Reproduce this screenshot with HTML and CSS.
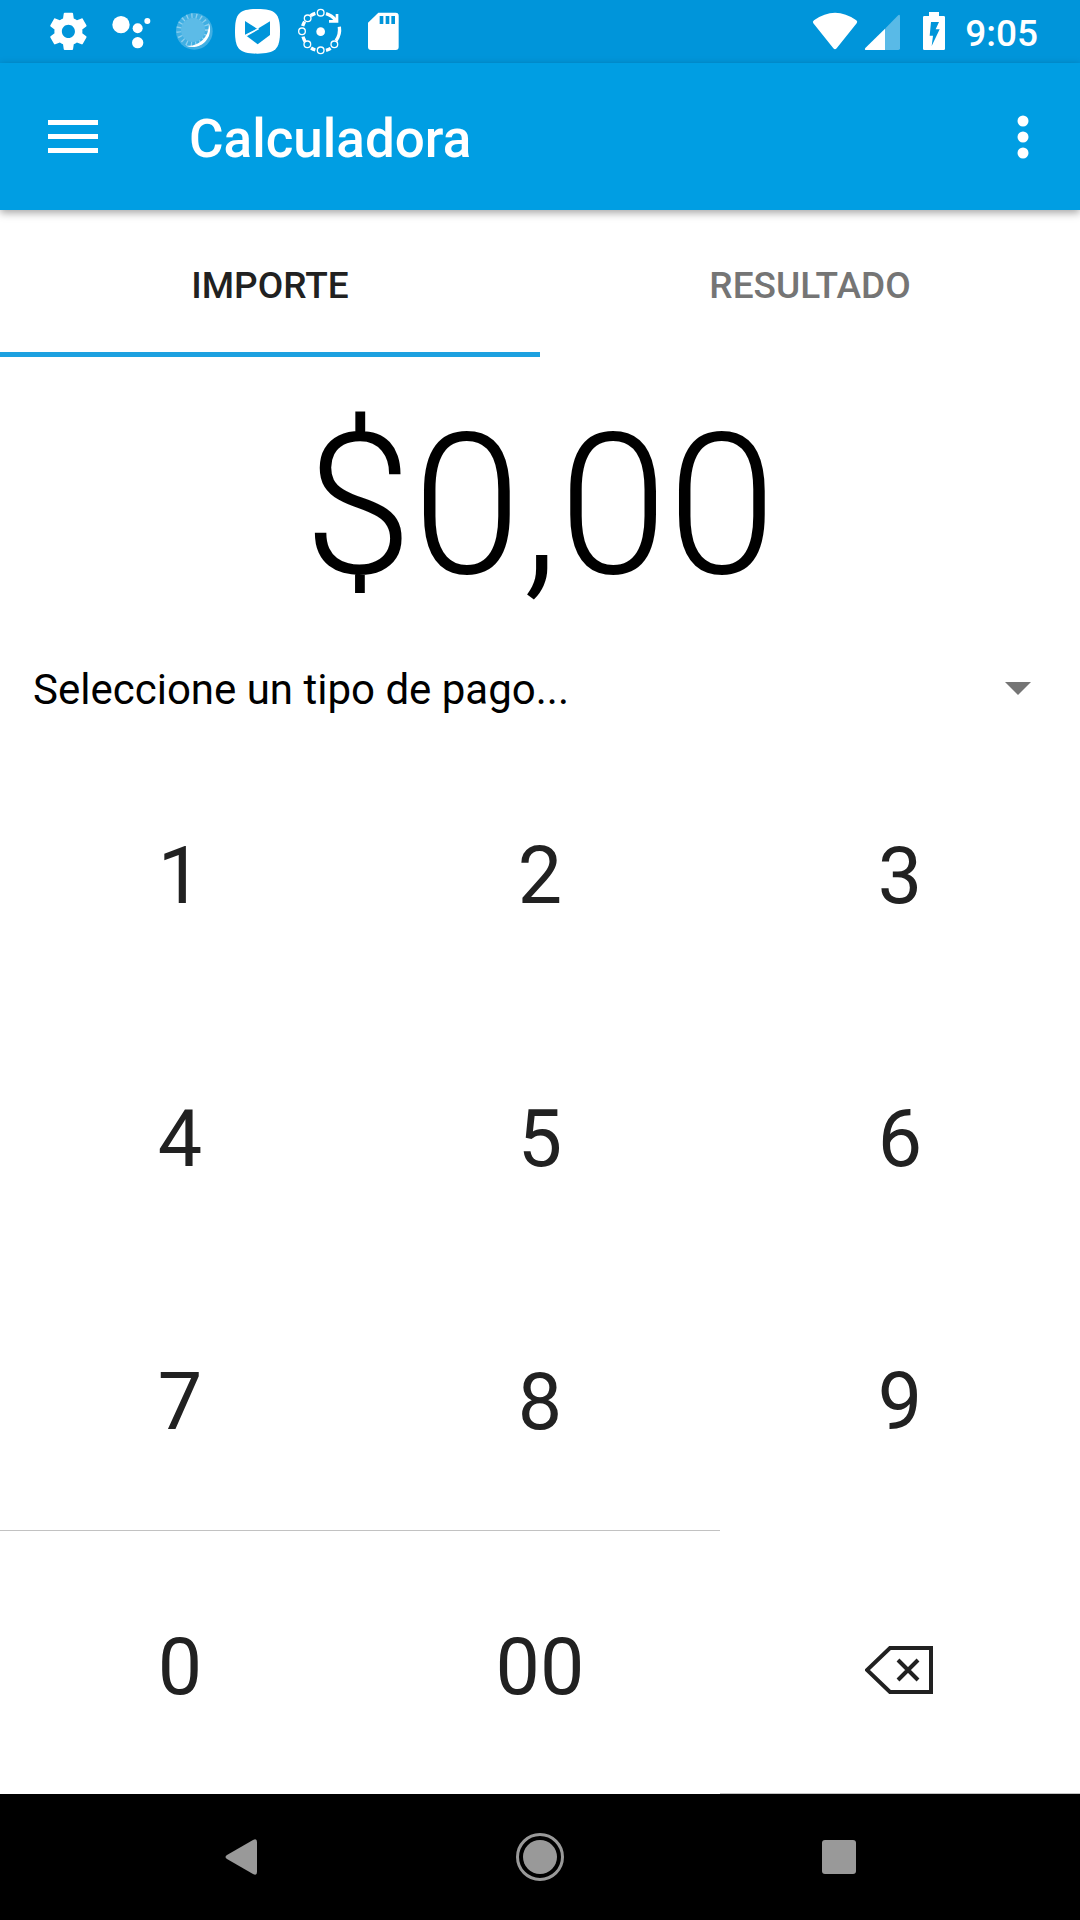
FILE: index.html
```html
<!DOCTYPE html>
<html lang="es">
<head>
    <meta charset="UTF-8">
    <meta name="viewport" content="width=device-width, initial-scale=1.0">
    <title>Calculadora</title>
    <link rel="stylesheet" href="styles.css">
</head>
<body>
    <div class="status-bar">
        <div class="notifications">
            <svg class="notice" viewBox="0 0 189 189">
                <path transform="translate(27 27) scale(5.6)" d="M19.43 12.98c.04-.32.07-.64.07-.98s-.03-.66-.07-.98l2.11-1.65c.19-.15.24-.42.12-.64l-2-3.46c-.12-.22-.39-.3-.61-.22l-2.49 1c-.52-.4-1.08-.73-1.69-.98l-.38-2.65C14.46 2.18 14.25 2 14 2h-4c-.25 0-.46.18-.49.42l-.38 2.65c-.61.25-1.17.59-1.69.98l-2.49-1c-.23-.09-.49 0-.61.22l-2 3.46c-.13.22-.07.49.12.64l2.11 1.65c-.04.32-.07.65-.07.98s.03.66.07.98l-2.11 1.65c-.19.15-.24.42-.12.64l2 3.46c.12.22.39.3.61.22l2.49-1c.52.4 1.08.73 1.69.98l.38 2.65c.03.24.24.42.49.42h4c.25 0 .46-.18.49-.42l.38-2.65c.61-.25 1.17-.59 1.69-.98l2.49 1c.23.09.49 0 .61-.22l2-3.46c.12-.22.07-.49-.12-.64l-2.11-1.65zM12 15.5c-1.93 0-3.5-1.57-3.5-3.5s1.57-3.5 3.5-3.5 3.5 1.57 3.5 3.5-1.57 3.5-3.5 3.5z"/>
            </svg>
            <svg class="notice" viewBox="0 0 189 189">
                <circle cx="63" cy="74" r="26"/>
                <circle cx="113" cy="85" r="15"/>
                <circle cx="142" cy="63" r="9"/>
                <circle cx="113" cy="128" r="17"/>
            </svg>
            <svg class="notice" viewBox="0 0 189 189">
                <circle cx="94" cy="94" r="55" opacity=".25"/>
                <circle cx="90" cy="90" r="43" fill="none" stroke="#fff" stroke-width="14" stroke-dasharray="4 10" opacity=".4"/>
                <circle cx="90" cy="90" r="36" opacity=".15"/>
                <path d="M137 68C155 112 112 155 68 137C108 142 142 108 137 68z"/>
            </svg>
            <svg class="notice" viewBox="0 0 189 189">
                <path d="M94 27c54 0 68 13 68 67s-14 67-68 67-67-13-67-67 13-67 67-67z"/>
                <path class="cut" d="M57 63l36 23-36 18z"/>
                <path class="cut" d="M132 64v41l-37 28-34-26z"/>
                <path d="M61 107l37-21" fill="none" stroke="#fff" stroke-width="4"/>
            </svg>
            <svg class="notice" viewBox="0 0 189 189">
                <circle cx="95" cy="95" r="13"/>
                <g fill="none" stroke="#fff">
                    <path d="M151 80a57 57 0 0 1-10 42M125 145a57 57 0 0 1-14 6M79 150a57 57 0 0 1-13-6M48 124a57 57 0 0 1-6-14M41 78a57 57 0 0 1 6-13M65 47a57 57 0 0 1 14-7M111 41a57 57 0 0 1 29 20" stroke-width="10"/>
                    <g stroke-width="4">
                        <circle cx="95" cy="38" r="10"/>
                        <circle cx="56" cy="55" r="10"/>
                        <circle cx="39" cy="94" r="10"/>
                        <circle cx="55" cy="133" r="10"/>
                        <circle cx="95" cy="151" r="10"/>
                        <circle cx="136" cy="133" r="10"/>
                    </g>
                    <path d="M144 42v22h-24" stroke-width="8"/>
                </g>
            </svg>
            <svg class="notice" viewBox="0 0 189 189">
                <path d="M79 38h52a9 9 0 0 1 9 9v94a9 9 0 0 1-9 9H57a9 9 0 0 1-9-9V68z"/>
                <path class="cut" d="M83 48h11v24H83zM101 48h11v24h-11zM118 48h11v24h-11z"/>
            </svg>
        </div>
        <div class="system">
            <svg class="signal" viewBox="0 0 147 189">
                <path d="M7 70q-4-5 2-9q63-45 127 0q5 4 1 9L77 145q-5 6-10 0z"/>
            </svg>
            <svg class="signal" viewBox="0 0 147 189">
                <path d="M75 86l38-39q7-7 7 2v96q0 5-5 5H75z" opacity=".35"/>
                <path d="M75 86v64H19q-7 0-3-6z"/>
            </svg>
            <svg class="signal" viewBox="0 0 147 189">
                <path d="M60 36h30v12h14q4 0 4 4v94q0 4-4 4H46q-4 0-4-4V52q0-4 4-4h14z"/>
                <path class="cut" d="M66 66h24L80 88h12l-24 50 4-31H62z"/>
            </svg>
            <span class="time">9:05</span>
        </div>
    </div>

    <header class="app-bar">
        <button class="menu-button" aria-label="Menú">
            <svg width="50" height="34" viewBox="0 0 50 34"><path d="M0 0h50v5H0zM0 14h50v5H0zM0 28h50v5H0z"/></svg>
        </button>
        <h1>Calculadora</h1>
        <button class="more-button" aria-label="Más opciones">
            <svg width="12" height="44" viewBox="0 0 12 44">
                <circle cx="6" cy="6" r="5.5"/>
                <circle cx="6" cy="22" r="5.5"/>
                <circle cx="6" cy="38" r="5.5"/>
            </svg>
        </button>
    </header>

    <nav class="tabs">
        <button class="tab active">IMPORTE</button>
        <button class="tab">RESULTADO</button>
    </nav>

    <main>
        <div class="amount">$0,00</div>
        <div class="payment">
            <select aria-label="Tipo de pago">
                <option>Seleccione un tipo de pago...</option>
            </select>
            <svg class="arrow" width="26" height="13" viewBox="0 0 26 13"><path d="M0 0h26L13 13z"/></svg>
        </div>
        <div class="keypad">
            <button>1</button>
            <button>2</button>
            <button>3</button>
            <button>4</button>
            <button>5</button>
            <button>6</button>
            <button>7</button>
            <button>8</button>
            <button>9</button>
            <button class="line-top">0</button>
            <button class="line-top">00</button>
            <button class="line-bottom" aria-label="Borrar">
                <svg width="70" height="58" viewBox="0 0 70 58" fill="none" stroke="#212121" stroke-width="4">
                    <path d="M25 11h41v44H25L2 33z"/>
                    <path d="M33 23l20 20M53 23L33 43"/>
                </svg>
            </button>
        </div>
    </main>

    <div class="nav-bar">
        <button aria-label="Atrás">
            <svg width="32" height="36" viewBox="0 0 32 36"><path d="M28 1q4-2 4 2v30q0 4-4 2L2 20q-3-2 0-4z"/></svg>
        </button>
        <button aria-label="Inicio">
            <svg width="48" height="48" viewBox="0 0 48 48">
                <circle cx="24" cy="24" r="17"/>
                <circle cx="24" cy="24" r="22.5" fill="none" stroke="#999" stroke-width="3"/>
            </svg>
        </button>
        <button aria-label="Recientes">
            <svg width="34" height="34" viewBox="0 0 34 34"><rect width="34" height="34" rx="3"/></svg>
        </button>
    </div>
</body>
</html>
```

FILE: styles.css
```css
* {
    box-sizing: border-box;
}
body {
    font-family: Roboto, sans-serif;
    background-color: #fff;
    color: #212121;
    margin: 0;
    min-height: 100vh;
    display: flex;
    flex-direction: column;
}
button {
    font-family: inherit;
    color: inherit;
    background: none;
    border: none;
    padding: 0;
    cursor: pointer;
}
svg {
    display: block;
}

/* Status bar */
.status-bar {
    display: flex;
    justify-content: space-between;
    height: 63px;
    padding: 0 42px 0 37px;
    background-color: #0095da;
    color: #fff;
    fill: #fff;
}
.notifications,
.system {
    display: flex;
    align-items: center;
}
.notice {
    width: 63px;
    height: 63px;
}
.signal {
    width: 49px;
    height: 63px;
}
.cut {
    fill: #0095da;
}
.time {
    font-size: 37px;
    font-weight: 500;
    line-height: 44px;
    padding-top: 4px;
    margin-left: 7px;
}

/* App bar */
.app-bar {
    display: flex;
    align-items: center;
    height: 147px;
    background-color: #009ee3;
    color: #fff;
    fill: #fff;
    position: relative;
    box-shadow: 0 3px 8px rgba(0, 0, 0, 0.35);
}
.app-bar button {
    display: flex;
    justify-content: center;
    align-items: center;
    height: 100%;
}
.menu-button {
    width: 146px;
}
.more-button {
    width: 115px;
}
h1 {
    flex: 1;
    margin: 0 0 0 43px;
    padding-top: 4px;
    font-size: 53px;
    font-weight: 500;
    line-height: 62px;
}

/* Tabs */
.tabs {
    display: flex;
}
.tab {
    flex: 1;
    height: 147px;
    padding-top: 8px;
    border-bottom: 5px solid transparent;
    font-size: 37px;
    font-weight: 500;
    color: #757575;
}
.tab.active {
    color: #212121;
    border-bottom-color: #1da1e0;
}

/* Content */
main {
    flex: 1;
    display: flex;
    flex-direction: column;
}
.amount {
    padding: 34px 0 17px;
    font-size: 196px;
    font-weight: 300;
    line-height: 230px;
    text-align: center;
    color: #000;
}
.payment {
    position: relative;
}
.payment select {
    display: block;
    width: 100%;
    height: 102px;
    padding: 0 80px 0 33px;
    appearance: none;
    background: none;
    border: none;
    font-family: inherit;
    font-size: 42px;
    color: #000;
}
.payment .arrow {
    position: absolute;
    right: 49px;
    top: 44px;
    fill: #757575;
    pointer-events: none;
}
.keypad {
    flex: 1;
    display: grid;
    grid-template-columns: repeat(3, 1fr);
    grid-template-rows: repeat(3, 1fr) 264px;
}
.keypad button {
    display: flex;
    justify-content: center;
    align-items: center;
    padding-top: 8px;
    font-size: 79px;
}
.keypad .line-top {
    border-top: 1px solid #c2c2c2;
}
.keypad .line-bottom {
    border-bottom: 1px solid #c2c2c2;
}

/* Navigation bar */
.nav-bar {
    display: flex;
    height: 126px;
    padding: 0 92px;
    background-color: #000;
    fill: #999;
}
.nav-bar button {
    flex: 1;
    display: flex;
    justify-content: center;
    align-items: center;
}
```
